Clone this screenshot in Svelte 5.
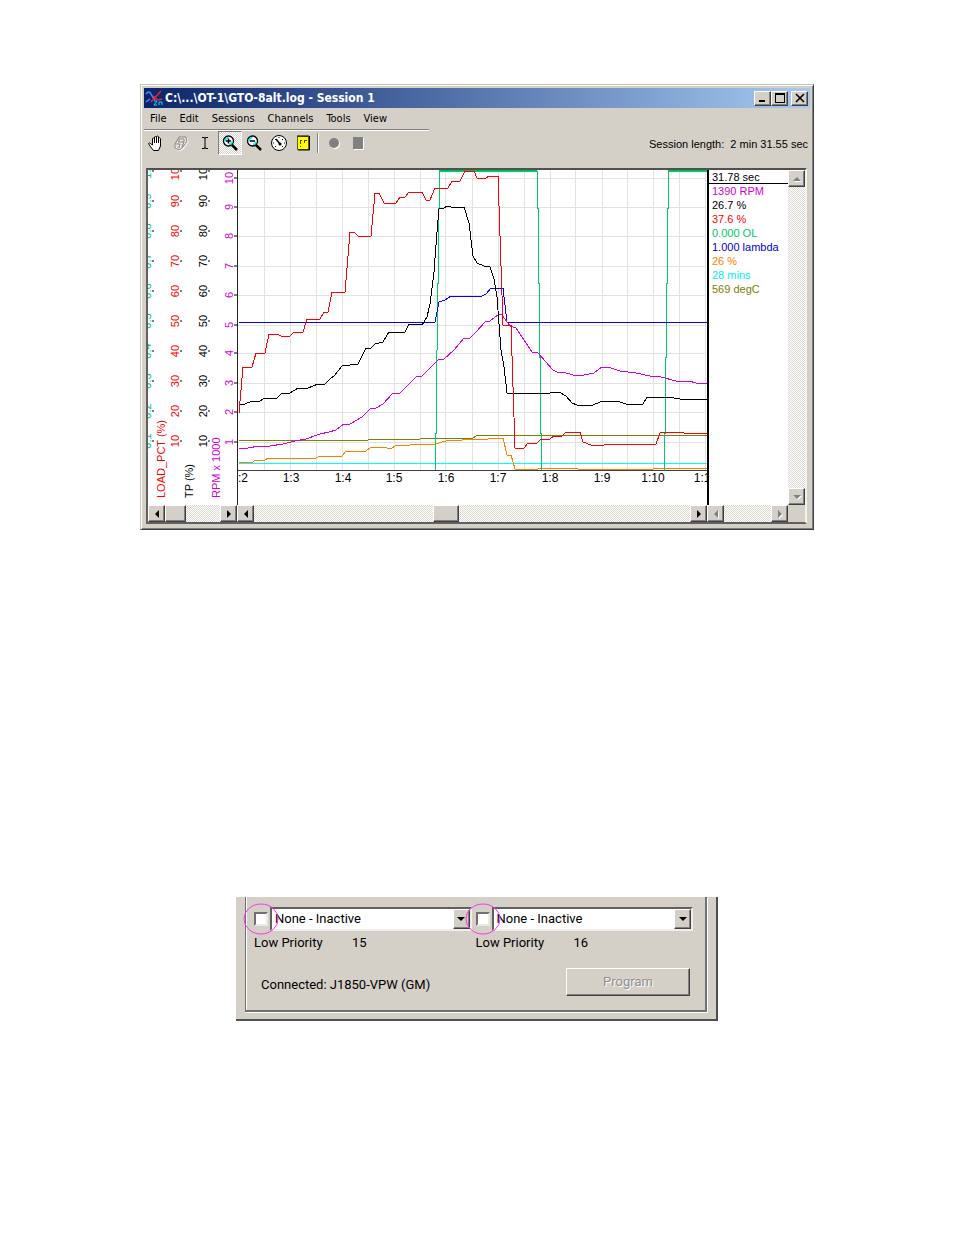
<script>
  const menus = ['File', 'Edit', 'Sessions', 'Channels', 'Tools', 'View'];

  const readouts = [
    { text: '1390 RPM', color: '#d400d4' },
    { text: '26.7 %', color: '#000000' },
    { text: '37.6 %', color: '#ff0000' },
    { text: '0.000 OL', color: '#00c864' },
    { text: '1.000 lambda', color: '#0000d8' },
    { text: '26 %', color: '#ff8000' },
    { text: '28 mins', color: '#00f0f0' },
    { text: '569 degC', color: '#808000' }
  ];

  const gridX = [264, 290, 316, 342, 368, 394, 420, 445, 472, 498, 524, 550, 575, 602, 627, 653, 679, 705];
  const gridY = [178, 207, 236, 266, 295, 325, 353, 383, 412, 442];
  const times = [
    [243, ':2'], [291, '1:3'], [343, '1:4'], [394, '1:5'], [446, '1:6'], [498, '1:7'],
    [550, '1:8'], [602, '1:9'], [653, '1:10'], [705, '1:11']
  ];
  const tens = [10, 20, 30, 40, 50, 60, 70, 80, 90, 100];
  const tenY = (v) => 471 - v * 3;

  const traces = [
    { color: '#00ffff', points: '239,463 707,463' },
    { color: '#808000', points: '239,440 368,440 369,439 420,439 421,438 473,438 478,435 707,435' },
    { color: '#ff8000', points: '239,462 253,462 255,460 265,460 268,458 316,458 318,457 342,456 346,451 366,451 371,447 384,447 387,448 392,448 395,446 410,445 413,444 435,444 446,441 462,440 473,439 488,439 489,438 503,438 507,455 511,455 515,469 538,469 540,468 576,468 578,469 653,469 654,468 707,468' },
    { color: '#00cc66', points: '435,470 435,433 436,433 436,360 437,350 437,283 438,283 438,208 439,208 439,171 537,171 537,208 538,208 538,283 539,283 539,357 540,357 540,433 541,433 541,470' },
    { color: '#00cc66', points: '664,470 664,433 665,433 665,357 666,357 666,283 667,283 667,208 668,208 668,171 707,171' },
    { color: '#0000ff', points: '239,322 435,322 439,302 445,300 451,296 482,296 486,294 491,288 503,288 507,322 707,322' },
    { color: '#d800d8', points: '239,448 248,448 259,446 270,446 283,444 295,441 306,439 320,434 329,432 336,430 344,424 350,424 362,417 371,408 376,408 383,404 392,394 400,393 416,377 422,376 430,368 438,360 444,359 454,350 464,338 470,338 476,332 486,321 490,321 499,314 502,315 510,326 516,328 524,340 532,352 538,353 553,370 557,372 563,372 573,375 584,375 594,373 602,367 608,367 620,371 636,373 650,376 661,377 676,381 689,381 696,383 707,383' },
    { color: '#000000', points: '239,405 245,404 252,401 260,401 265,398 277,398 282,393 290,393 298,388 308,388 318,384 325,384 330,379 334,376 342,366 358,364 366,348 371,348 375,344 383,342 389,332 405,332 409,324 422,325 427,317 430,304 434,272 437,232 439,209 444,208 447,206 451,207 464,207 469,223 473,256 477,263 484,266 490,267 494,279 497,297 501,350 504,367 507,393 550,393 552,392 559,392 566,396 572,403 577,405 593,405 600,402 608,401 615,401 620,402 626,404 643,404 647,397 668,397 680,399 707,399' },
    { color: '#ff0000', points: '239,413 243,367 252,367 256,353 265,353 269,334 277,334 281,336 290,336 294,332 303,332 307,319 320,319 324,312 328,312 332,292 345,292 350,232 354,232 358,236 371,236 375,193 379,193 384,203 396,203 400,197 405,197 409,192 422,192 426,200 430,200 435,188 448,188 452,181 460,181 465,171 474,171 477,178 486,178 489,176 498,176 503,325 511,325 515,448 524,448 528,443 537,443 541,439 550,439 554,436 562,436 566,432 580,432 583,442 591,445 604,445 607,444 656,444 660,433 666,432 682,432 684,433 707,433' }
  ];
</script>

{#snippet arrow(dir, off)}
  <svg class="arrow" class:off width="8" height="8" viewBox="0 0 8 8" aria-hidden="true">
    {#if dir === 'left'}<path d="M6 0v8L2 4z" />
    {:else if dir === 'right'}<path d="M2 0v8l4-4z" />
    {:else if dir === 'up'}<path d="M0 6h8L4 2z" />
    {:else}<path d="M0 2h8L4 6z" />{/if}
  </svg>
{/snippet}

{#snippet slot(id, number)}
  <div class="slot">
    <div class="pick">
      <span class="tick">
        <input type="checkbox" id={'use' + id} aria-label={'Use channel ' + number} />
        <svg class="ring" viewBox="0 0 36 32" aria-hidden="true"><ellipse cx="18" cy="16" rx="17" ry="15" /></svg>
      </span>
      <span class="combo">
        <select aria-label={'Channel ' + number}><option>None - Inactive</option></select>
        <span class="drop">{@render arrow('down', false)}</span>
      </span>
    </div>
    <div class="priority"><label for={'use' + id}>Low Priority</label><span>{number}</span></div>
  </div>
{/snippet}

<main>
  <section class="window">
    <header class="titlebar">
      <svg width="18" height="18" viewBox="0 0 18 18" aria-hidden="true" fill="none">
        <path d="M1 5q3-4 5 0t4 6M1 13l4-3" stroke="#4a8cff" stroke-width="1.5" />
        <path d="M6 13 16 2M8 7l5 4 4-1" stroke="#f02038" stroke-width="1.5" />
        <path d="M9 12h3l-3 4h3M14 16v-3h3v3" stroke="#00e0ff" />
      </svg>
      <h1>C:\...\OT-1\GTO-8alt.log - Session 1</h1>
      <button class="raised cap" aria-label="Minimize"><svg width="12" height="10" viewBox="0 0 12 10"><path d="M2 7h6v2H2z" /></svg></button>
      <button class="raised cap" aria-label="Maximize"><svg width="12" height="10" viewBox="0 0 12 10"><path d="M1 0h10v10H1zM2 2v7h8V2z" fill-rule="evenodd" /></svg></button>
      <button class="raised cap close" aria-label="Close"><svg width="12" height="10" viewBox="0 0 12 10"><path d="m2 1 8 8m0-8L2 9" stroke="#000" stroke-width="1.6" /></svg></button>
    </header>

    <nav>
      {#each menus as item}<button>{item}</button>{/each}
    </nav>

    <div class="toolbar">
      <div class="tools">
        <button aria-label="Pan">
          <svg width="18" height="18" viewBox="0 0 18 18"><path d="M5.500 11V4.500q1-1 2 0V3q1-1 2 0v-.5q1-1 2 0V4q1-1 2 .5V12l-2 4.500h-5L3 12 1.500 9.500q1-1 2 0L5.500 11" fill="#fff" stroke="#000" /><path d="M7.500 4v5m2-6v6m2-5v5" stroke="#000" /></svg>
        </button>
        <button aria-label="Drag" disabled>
          <svg width="18" height="18" viewBox="0 0 18 18" fill="none"><path d="m3 10 4-7h7l1 4-4 6-4 3-4-2zM6 8h6l-2 5M7 8V5h5v3M4 10h4l-1 4" stroke="#fff" transform="translate(1 1)" /><path d="m3 10 4-7h7l1 4-4 6-4 3-4-2zM6 8h6l-2 5M7 8V5h5v3M4 10h4l-1 4" stroke="#888" /></svg>
        </button>
        <button aria-label="Select">
          <svg width="18" height="18" viewBox="0 0 18 18" fill="none"><path d="M6 3.500h2.500l.5 1 .5-1H12M9 4v10M6 14.500h2.500l.5-1 .5 1H12" stroke="#000" /></svg>
        </button>
        <button class="pressed" aria-label="Zoom in" aria-pressed="true">
          <svg width="18" height="18" viewBox="0 0 18 18" fill="none"><circle cx="7.500" cy="7" r="5" fill="#fff" stroke="#000" stroke-width="1.300" /><path d="M4 7.500Q4 4 7.500 3.500M8 10.500q3 0 3-3" stroke="#00e0f0" stroke-width="1.500" /><path d="M5 7h5M7.500 4.500v5" stroke="#000" stroke-width="1.500" /><path d="m11 11 5 5" stroke="#000" stroke-width="2.500" /></svg>
        </button>
        <button aria-label="Zoom out">
          <svg width="18" height="18" viewBox="0 0 18 18" fill="none"><circle cx="7.500" cy="7" r="5" fill="#fff" stroke="#000" stroke-width="1.300" /><path d="M4 7.500Q4 4 7.500 3.500M8 10.500q3 0 3-3" stroke="#00e0f0" stroke-width="1.500" /><path d="M5 7h5" stroke="#000" stroke-width="1.500" /><path d="m11 11 5 5" stroke="#000" stroke-width="2.500" /></svg>
        </button>
        <button aria-label="Gauges">
          <svg width="18" height="18" viewBox="0 0 18 18" fill="none"><circle cx="9" cy="9" r="7.500" fill="#fff" stroke="#000" /><path d="M3 9h1m10 0h1M9 3v1M5 5l1 1m7-1-1 1M5 13l1-1m7 1-1-1" stroke="#000" /><path d="m6 5 4 5" stroke="#000" stroke-width="1.500" /><circle cx="10" cy="10" r="1.500" fill="#000" /></svg>
        </button>
        <button aria-label="Notes">
          <svg width="18" height="18" viewBox="0 0 18 18" fill="none"><path d="M3.500 2.500h11v13h-11z" fill="#ff0" stroke="#606000" /><path d="M15.500 2v14H4M4 1v2m2-2v2m2-2v2m2-2v2m2-2v2m2-2v2" stroke="#000" /><path d="M6 6.500h2m2 0h3M6.500 7v3m4-3v2M6 12.500h1" stroke="#554400" /></svg>
        </button>
      </div>
      <span class="divider"></span>
      <button aria-label="Record" disabled><svg width="18" height="18" viewBox="0 0 18 18"><circle cx="10" cy="10" r="5" fill="#fff" /><circle cx="9" cy="9" r="5" fill="#808080" /></svg></button>
      <button aria-label="Stop" disabled><svg width="18" height="18" viewBox="0 0 18 18"><path d="M5 4h10v12H5z" fill="#fff" /><path d="M4 3h10v12H4z" fill="#808080" /></svg></button>
      <p>Session length:&nbsp; 2 min 31.55 sec</p>
    </div>

    <div class="view">
      <svg class="chart" viewBox="148 170 559 335" role="img" aria-label="Logged channels over time">
        <g stroke="#e2e2e2" shape-rendering="crispEdges">
          {#each gridX as x}<path d={`M${x} 170V470`} />{/each}
          {#each gridY as y}<path d={`M238 ${y}H705`} />{/each}
        </g>
        <g fill="none" shape-rendering="crispEdges">
          {#each traces as t}<polyline points={t.points} stroke={t.color} />{/each}
        </g>
        <path d="M439 170.500H537M668 170.500H707" stroke="#00b85c" />
        <path d="M238 470.500H707" stroke="#404040" />
        <path d="M237.500 170V505" stroke="#222" />
        <g class="time">
          {#each times as [x, label]}<text {x} y="482">{label}</text>{/each}
        </g>
        <g class="scale">
          {#each tens as v}
            <text fill="#00c080" transform={`translate(151 ${tenY(v)}) rotate(-90)`}>{(v / 100).toFixed(1)}</text>
            <text fill="#ff0000" transform={`translate(179 ${tenY(v)}) rotate(-90)`}>{v}</text>
            <text fill="#000000" transform={`translate(207 ${tenY(v)}) rotate(-90)`}>{v}</text>
            <path d={`M152 ${tenY(v)}h2M180 ${tenY(v)}h2M208 ${tenY(v)}h2`} stroke="#000" />
          {/each}
          {#each gridY as y, i}
            <text fill="#d800d8" transform={`translate(233 ${y}) rotate(-90)`}>{10 - i}</text>
            <path d={`M234 ${y}h3`} stroke="#000" />
          {/each}
        </g>
        <g class="axis">
          <text fill="#ff0000" transform="translate(165 498) rotate(-90)">LOAD_PCT (%)</text>
          <text fill="#000000" transform="translate(193 498) rotate(-90)">TP (%)</text>
          <text fill="#d800d8" transform="translate(220 498) rotate(-90)">RPM x 1000</text>
        </g>
      </svg>
      <aside>
        <p class="now">31.78 sec</p>
        {#each readouts as r}<p style:color={r.color}>{r.text}</p>{/each}
      </aside>
      <div class="bar vertical">
        <button class="raised" aria-label="Scroll up" disabled>{@render arrow('up', true)}</button>
        <button class="raised" aria-label="Scroll down" disabled>{@render arrow('down', true)}</button>
      </div>
      <div class="bars">
        <div class="bar axes">
          <button class="raised" aria-label="Scroll axes left">{@render arrow('left', false)}</button>
          <span class="raised thumb"></span><span class="rest"></span>
          <button class="raised" aria-label="Scroll axes right">{@render arrow('right', false)}</button>
        </div>
        <div class="bar plot">
          <button class="raised" aria-label="Scroll back">{@render arrow('left', false)}</button>
          <span class="before"></span><span class="raised thumb wide"></span><span class="rest"></span>
          <button class="raised" aria-label="Scroll forward">{@render arrow('right', false)}</button>
        </div>
      </div>
      <div class="bar values">
        <button class="raised" aria-label="Scroll values left" disabled>{@render arrow('left', true)}</button>
        <span class="rest"></span>
        <button class="raised" aria-label="Scroll values right" disabled>{@render arrow('right', true)}</button>
      </div>
      <span class="corner"></span>
    </div>
  </section>

  <section class="panel">
    <div class="group">
      <div class="slots">
        {@render slot('a', 15)}
        {@render slot('b', 16)}
      </div>
      <footer>
        <p>Connected: J1850-VPW (GM)</p>
        <button class="raised program" disabled>Program</button>
      </footer>
    </div>
  </section>
</main>

<style>
  :global(body) {
    margin: 0;
    background: #fff;
  }
  main {
    padding: 84px 140px 0;
    font: 12px/16px Roboto, 'Liberation Sans', sans-serif;
    color: #000;
  }
  main * {
    box-sizing: border-box;
  }
  h1, p {
    margin: 0;
  }
  button {
    font: inherit;
    color: inherit;
    padding: 0;
    border: 0;
    background: none;
    display: flex;
    align-items: center;
    justify-content: center;
  }
  svg {
    display: block;
    flex: none;
  }
  .raised {
    background: #d4d0c8;
    border: 1px solid;
    border-color: #fff #404040 #404040 #fff;
    box-shadow: inset -1px -1px #808080;
  }

  .window {
    background: #d4d0c8;
    border: 1px solid;
    border-color: #c8c4bc #404040 #404040 #c8c4bc;
    box-shadow: inset 1px 1px #fff, inset -1px -1px #808080;
    padding: 3px 3px 5px;
  }
  .titlebar {
    display: flex;
    align-items: center;
    height: 20px;
    padding: 0 2px 0 1px;
    background: linear-gradient(90deg, #0a246a, #a6caf0);
  }
  .titlebar h1 {
    flex: 1;
    margin-left: 2px;
    color: #fff;
    font: bold 12px/20px 'DejaVu Sans Condensed', 'DejaVu Sans', sans-serif;
    white-space: nowrap;
  }
  .cap {
    width: 17px;
    height: 15px;
  }
  .close {
    margin-left: 3px;
  }
  nav {
    display: flex;
    gap: 13px;
    width: 285px;
    height: 22px;
    padding: 0 0 0 6px;
    border-bottom: 1px solid #808080;
    box-shadow: 0 1px #fff;
    font: 11px/20px 'DejaVu Sans Condensed', 'DejaVu Sans', sans-serif;
  }
  .toolbar {
    display: flex;
    height: 38px;
    padding: 1px 2px 13px 0;
  }
  .toolbar button {
    width: 24px;
    height: 24px;
  }
  .tools {
    display: flex;
    justify-content: space-between;
    width: 171px;
  }
  .toolbar .pressed {
    border: 1px solid;
    border-color: #808080 #fff #fff #808080;
    background: repeating-conic-gradient(#fff 0 25%, #d4d0c8 0 50%) 0 0 / 2px 2px;
  }
  .divider {
    width: 2px;
    height: 20px;
    margin: 2px 3px 2px 2px;
    border-left: 1px solid #808080;
    border-right: 1px solid #fff;
  }
  .toolbar p {
    margin: 5px 0 0 auto;
    font-family: 'Liberation Sans', Arial, sans-serif;
    font-size: 11px;
    white-space: nowrap;
  }

  .view {
    display: grid;
    grid-template-columns: 1fr 81px 17px;
    margin: 0 3px 0 2px;
    border: 2px solid;
    border-color: #505050 #f4f2ee #606060 #606060;
    background: #fff;
    font-family: 'Liberation Sans', Arial, sans-serif;
  }
  .chart {
    width: 100%;
    height: auto;
  }
  .time {
    font-size: 12px;
    text-anchor: middle;
  }
  .scale {
    font-size: 11px;
    text-anchor: middle;
  }
  .axis {
    font-size: 11px;
  }
  aside {
    border-left: 2px solid #000;
    font-size: 11px;
    line-height: 14px;
  }
  aside p {
    padding-left: 3px;
    white-space: nowrap;
  }
  .now {
    height: 14px;
    border-bottom: 1px solid #000;
  }
  .bars {
    display: flex;
  }
  .bar {
    display: flex;
    height: 17px;
    background: repeating-conic-gradient(#fff 0 25%, #dcd9d2 0 50%) 0 0 / 2px 2px;
  }
  .bar button {
    flex: none;
    width: 17px;
    height: 17px;
  }
  .vertical {
    flex-direction: column;
    justify-content: space-between;
    height: auto;
  }
  .axes {
    flex: 89;
  }
  .plot {
    flex: 470;
  }
  .rest {
    flex: 1;
  }
  .before {
    flex: 0 0 38%;
  }
  .thumb {
    width: 21px;
  }
  .wide {
    width: 26px;
  }
  .corner {
    background: #d4d0c8;
  }
  .off {
    fill: #808080;
    filter: drop-shadow(1px 1px 0 #fff);
  }

  .panel {
    margin: 367px 96px 0;
    padding: 0 9px 7px;
    background: #d4d0c8;
    border-right: 2px solid #505050;
    border-bottom: 2px solid #505050;
    font-size: 13px;
  }
  .group {
    padding: 10px 12px 14px 8px;
    border: solid #707070;
    border-width: 0 2px 2px 1px;
    box-shadow: inset 1px 0 #fff, 1px 1px #fff;
  }
  .slots {
    display: grid;
    grid-template-columns: 1fr 1fr;
    gap: 4px;
  }
  .pick {
    display: flex;
    align-items: center;
    gap: 2px;
  }
  .tick {
    position: relative;
    display: flex;
  }
  .tick input {
    appearance: none;
    width: 14px;
    height: 14px;
    margin: 0;
    background: #fff;
    border: 2px solid;
    border-color: #707070 #ece9e4 #ece9e4 #707070;
  }
  .ring {
    position: absolute;
    left: -11px;
    top: -9px;
    width: 36px;
    height: 32px;
    fill: none;
    stroke: #ff30f0;
    pointer-events: none;
    z-index: 1;
  }
  .combo {
    flex: 1;
    display: flex;
    height: 24px;
    background: #fff;
    border: 2px solid;
    border-color: #606060 #f0eeea #f0eeea #606060;
  }
  .combo select {
    appearance: none;
    flex: 1;
    min-width: 0;
    padding: 0 3px;
    border: 0;
    background: none;
    color: #000;
    font: inherit;
  }
  .drop {
    display: flex;
    align-items: center;
    justify-content: center;
    width: 17px;
    background: #d4d0c8;
    border: 1px solid;
    border-color: #fff #404040 #404040 #fff;
    box-shadow: inset -1px -1px #808080;
    pointer-events: none;
  }
  .priority {
    display: flex;
    padding-top: 4px;
  }
  .priority label {
    width: 98px;
  }
  footer {
    display: flex;
    align-items: flex-end;
    justify-content: space-between;
    padding: 17px 3px 0 7px;
  }
  footer p {
    padding-bottom: 3px;
  }
  .program {
    width: 124px;
    height: 28px;
    color: #909090;
    text-shadow: 1px 1px #fff;
  }
</style>
